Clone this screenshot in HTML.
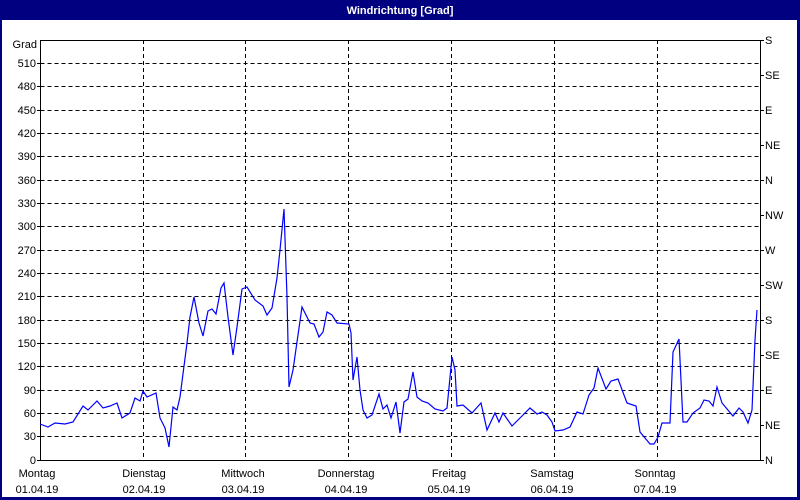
<!DOCTYPE html>
<html><head><meta charset="utf-8"><style>
html,body{margin:0;padding:0;background:#000080;width:800px;height:500px;overflow:hidden}
svg{display:block}
text{font-family:"Liberation Sans",sans-serif;font-size:11px;fill:#000}
</style></head><body>
<svg width="800" height="500" viewBox="0 0 800 500">
<rect x="0" y="0" width="800" height="500" fill="#000080"/>
<rect x="2" y="20" width="795" height="477" fill="#fff"/>
<text x="400" y="14" text-anchor="middle" style="fill:#fff;font-weight:bold">Windrichtung [Grad]</text>
<g shape-rendering="crispEdges" stroke="#000" stroke-width="1" stroke-dasharray="4,3" fill="none">
<path d="M40.5 63.5H760M40.5 86.5H760M40.5 110.5H760M40.5 133.5H760M40.5 156.5H760M40.5 180.5H760M40.5 203.5H760M40.5 226.5H760M40.5 250.5H760M40.5 273.5H760M40.5 296.5H760M40.5 320.5H760M40.5 343.5H760M40.5 366.5H760M40.5 390.5H760M40.5 413.5H760M40.5 436.5H760"/>
<path d="M143.5 40V460M245.5 40V460M348.5 40V460M451.5 40V460M554.5 40V460M657.5 40V460"/>
</g>
<g shape-rendering="crispEdges" stroke="#000" fill="none">
<rect x="40.5" y="40.5" width="720" height="420"/>
<path d="M37 63.5H41M37 86.5H41M37 110.5H41M37 133.5H41M37 156.5H41M37 180.5H41M37 203.5H41M37 226.5H41M37 250.5H41M37 273.5H41M37 296.5H41M37 320.5H41M37 343.5H41M37 366.5H41M37 390.5H41M37 413.5H41M37 436.5H41M37 460.5H41"/>
<path d="M760 40.5H764M760 75.5H764M760 110.5H764M760 145.5H764M760 180.5H764M760 215.5H764M760 250.5H764M760 285.5H764M760 320.5H764M760 355.5H764M760 390.5H764M760 425.5H764M760 460.5H764"/>
</g>
<g text-anchor="end">
<text x="37" y="48">Grad</text>
<text x="36" y="67">510</text><text x="36" y="90">480</text><text x="36" y="114">450</text><text x="36" y="137">420</text><text x="36" y="160">390</text><text x="36" y="184">360</text><text x="36" y="207">330</text><text x="36" y="230">300</text><text x="36" y="254">270</text><text x="36" y="277">240</text><text x="36" y="300">210</text><text x="36" y="324">180</text><text x="36" y="347">150</text><text x="36" y="370">120</text><text x="36" y="394">90</text><text x="36" y="417">60</text><text x="36" y="440">30</text><text x="36" y="464">0</text>
</g>
<g>
<text x="765" y="44">S</text><text x="765" y="79">SE</text><text x="765" y="114">E</text><text x="765" y="149">NE</text><text x="765" y="184">N</text><text x="765" y="219">NW</text><text x="765" y="254">W</text><text x="765" y="289">SW</text><text x="765" y="324">S</text><text x="765" y="359">SE</text><text x="765" y="394">E</text><text x="765" y="429">NE</text><text x="765" y="464">N</text>
</g>
<g text-anchor="middle">
<text x="37" y="477">Montag</text><text x="37" y="493">01.04.19</text>
<text x="144" y="477">Dienstag</text><text x="144" y="493">02.04.19</text>
<text x="243" y="477">Mittwoch</text><text x="243" y="493">03.04.19</text>
<text x="346" y="477">Donnerstag</text><text x="346" y="493">04.04.19</text>
<text x="449" y="477">Freitag</text><text x="449" y="493">05.04.19</text>
<text x="552" y="477">Samstag</text><text x="552" y="493">06.04.19</text>
<text x="655" y="477">Sonntag</text><text x="655" y="493">07.04.19</text>
</g>
<polyline fill="none" stroke="#0000ff" stroke-width="1.2" points="40,424 48,427 55,423 65,424 73,422 83,406 88,410 97,401 103,408 110,406 117,403 122,418 130,413 135,398 140,401 143,391 147,397 156,393 160,418 165,428 169,447 173,407 177,410 180,397 187,343 190,317 194,297 199,323 203,336 208,311 212,309 216,314 221,288 224,283 228,317 233,355 237,327 242,289 247,287 255,300 263,306 267,315 272,308 277,278 280,250 284,209 287,297 289,387 293,370 302,307 310,323 314,324 319,337 323,332 327,312 332,315 337,323 349,324 351,333 353,380 357,357 360,390 363,410 367,418 372,415 379,394 383,409 387,405 391,418 396,402 400,433 404,402 408,399 413,372 417,397 422,401 428,403 435,409 443,411 447,408 452,357 455,370 457,406 463,405 472,413 481,403 487,430 495,413 499,422 503,413 512,426 522,416 530,408 537,414 542,412 547,415 552,422 555,431 563,430 570,427 577,412 583,414 589,395 594,388 598,368 606,389 611,381 618,379 627,403 636,406 640,432 650,444 654,444 658,437 662,423 670,423 673,352 679,339 683,422 687,422 693,413 700,408 704,400 709,401 713,406 717,387 722,403 733,416 739,408 743,412 748,423 752,410 755,340 757,310"/>
</svg>
</body></html>
